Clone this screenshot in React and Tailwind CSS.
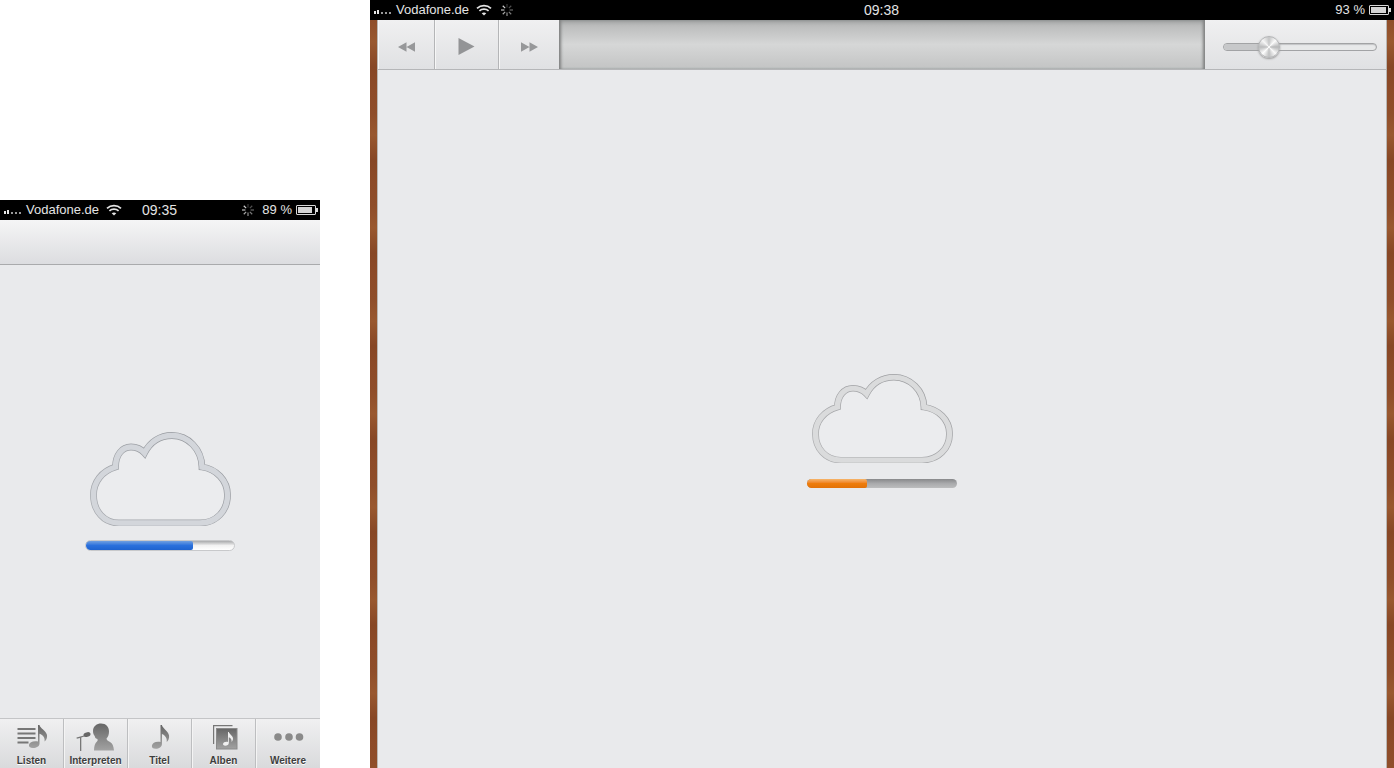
import React from 'react';

const CLOUD_PATH =
  'M29 91H110C126 91 137.500 79 137.500 63C137.500 48 126 37 112 35C111.500 17 98 3.500 82 3.500C70 3.500 60 10 54.500 21C51 17 46 15 41 15C32 15 25.500 23 25.500 35C12 39 3.500 50 3.500 63C3.500 79 14 91 29 91Z';

function Cloud({ id, height, band, edgeTop, edgeBottom }) {
  return (
    <svg width="141" height={height} viewBox="0 0 141 94" preserveAspectRatio="none" className="block" fill="none">
      <defs>
        <linearGradient id={id} x1="1" y1="0" x2="0" y2="1">
          <stop offset="0" stopColor={edgeTop} />
          <stop offset="1" stopColor={edgeBottom} />
        </linearGradient>
      </defs>
      <path d={CLOUD_PATH} fill="#ebecee" stroke={`url(#${id})`} strokeWidth="6.800" />
      <path d={CLOUD_PATH} stroke={band} strokeWidth="5.400" />
    </svg>
  );
}

function Signal() {
  return (
    <span className="flex items-end h-2 pl-px mr-[5px]">
      <span className="w-[2px] h-[3px] bg-[#e8e8e8]" />
      <span className="w-[2px] h-[4px] bg-[#e8e8e8] ml-px" />
      <span className="w-[2px] h-[2px] bg-[#9a9a9a] ml-[2px]" />
      <span className="w-[2px] h-[2px] bg-[#9a9a9a] ml-[2px]" />
      <span className="w-[2px] h-[2px] bg-[#9a9a9a] ml-[2px]" />
    </span>
  );
}

function Wifi({ className }) {
  return (
    <svg width="16" height="12" viewBox="0 0 16 12" className={className} fill="none" stroke="#e4e4e4" strokeWidth="1.800">
      <path d="M1 4.400C5 .8 11 .8 15 4.400" />
      <path d="M3.400 6.900C6 4.600 10 4.600 12.600 6.900" />
      <path d="M8 11.400 5.700 9.200C7 8.100 9 8.100 10.300 9.200Z" fill="#e4e4e4" stroke="none" />
    </svg>
  );
}

function Spinner({ className }) {
  const spokes = [0, 45, 90, 135, 180, 225, 270, 315];
  return (
    <svg width="14" height="14" viewBox="0 0 14 14" className={className}>
      {spokes.map((a, i) => (
        <line
          key={a}
          x1="7"
          y1="1"
          x2="7"
          y2="4.400"
          stroke="#e8e8e8"
          strokeWidth="1.200"
          strokeOpacity={0.25 + (i / 8) * 0.75}
          transform={`rotate(${a} 7 7)`}
        />
      ))}
    </svg>
  );
}

function Battery({ level }) {
  return (
    <span className="flex items-center">
      <span className="w-[20px] h-[10px] border border-[#d8d8d8] p-px flex rounded-[1px]">
        <span className="h-full bg-[#d4d4d4]" style={{ width: `${level}%` }} />
      </span>
      <span className="w-[2px] h-1 bg-[#d8d8d8]" />
    </span>
  );
}

function PhoneStatus() {
  return (
    <div className="h-5 bg-black flex items-center text-[13px] text-[#e4e4e4] pl-[3px] pr-[2px]">
      <Signal />
      <span>Vodafone.de</span>
      <Wifi className="ml-[7px]" />
      <span className="ml-[20px] text-[14px]">09:35</span>
      <Spinner className="ml-auto" />
      <span className="ml-[7px]">89 %</span>
      <span className="ml-[4px]">
        <Battery level={90} />
      </span>
    </div>
  );
}

// eighth note, stem top at the origin
const NOTE =
  'M0 0h1.500c.5 3.500 6.500 6 7.500 11 .5 3-1 6-2.500 7 .8-4-1.500-7-5-8.500V20c0 3-3 5-6.500 5-3 0-4.500-1.500-4-3.500.6-2.500 4-4.500 9-3.500Z';

function TabIcon({ children }) {
  return (
    <svg width="36" height="30" viewBox="0 0 36 30" className="block overflow-visible">
      <defs>
        <linearGradient id="tabGray" x1="0" y1="0" x2="0" y2="1">
          <stop offset="0" stopColor="#666" />
          <stop offset="1" stopColor="#a2a2a2" />
        </linearGradient>
      </defs>
      {children}
    </svg>
  );
}

const tabs = [
  {
    label: 'Listen',
    icon: (
      <>
        <path d="M3.500 6h18v2h-18zM3.500 10.500h18v2h-18zM3.500 15h18v2h-18zM3.500 19.500h11v2h-11z" fill="#777" />
        <path d={NOTE} transform="translate(24 3) scale(1 .92)" fill="url(#tabGray)" />
      </>
    ),
  },
  {
    label: 'Interpreten',
    icon: (
      <>
        <path d="M-1.500 15.500 6 13.400l.3 1.200-3 .9V29H2V15.900l-3.200.9Z" fill="#777" />
        <ellipse cx="9" cy="12.600" rx="3.600" ry="2.300" transform="rotate(-16 9 12.600)" fill="#666" />
        <path
          d="M15 9C15 4 19 1.500 23 1.500C28 1.500 31 5 31 9.500C31 13 30 15 28.500 16.500C28.500 18 30 19 32 20C34.500 21.300 35.500 24 36 28.500H16C16 24 17 21 19 19.500C20 18.500 19.800 17.500 19 16.800C17.500 16.500 16.800 15.500 16.800 14C15.800 13 15 11.500 15 9Z"
          fill="url(#tabGray)"
        />
      </>
    ),
  },
  {
    label: 'Titel',
    icon: <path d={NOTE} transform="translate(18.500 3) scale(.95)" fill="url(#tabGray)" />,
  },
  {
    label: 'Alben',
    icon: (
      <>
        <path d="M7 3h19.500v1.200H8.200V22H7Z" fill="#777" />
        <rect x="10.500" y="6.500" width="20.500" height="20.500" fill="url(#tabGray)" stroke="#8a8a8a" strokeWidth="1" />
        <path d={NOTE} transform="translate(22 10) scale(.55)" fill="#f0f0f0" />
      </>
    ),
  },
  {
    label: 'Weitere',
    icon: (
      <>
        <circle cx="8" cy="15" r="3.800" fill="#8a8a8a" />
        <circle cx="19" cy="15" r="3.800" fill="#8a8a8a" />
        <circle cx="29.500" cy="15" r="3.800" fill="#8a8a8a" />
      </>
    ),
  },
];

function TabBar() {
  return (
    <div className="h-[50px] shrink-0 flex border-t border-[#c4c5c7] bg-gradient-to-b from-[#f0f0f1] to-[#d9dadc]">
      {tabs.map((t, i) => (
        <div
          key={t.label}
          className={`w-[64px] flex flex-col items-center ${i < 4 ? 'border-r border-[#bdbec0] shadow-[1px_0_0_#f4f4f4]' : ''}`}
        >
          <div className="h-[37px] flex items-start pt-[3px]">
            <TabIcon>{t.icon}</TabIcon>
          </div>
          <span className="text-[10px] leading-none font-bold text-[#3d3d3d] whitespace-nowrap [text-shadow:0_1px_0_#fff]">
            {t.label}
          </span>
        </div>
      ))}
    </div>
  );
}

function Progress({ percent, height, fill, track }) {
  return (
    <div className={`w-[150px] rounded-full overflow-hidden flex ${track}`} style={{ height }}>
      <div className={`h-full rounded-r-[2px] ${fill}`} style={{ width: `${percent}%` }} />
    </div>
  );
}

function TransportButton({ width, children }) {
  return (
    <div
      className="h-full flex items-center justify-center pt-[4px] border-r border-[#b4b5b7] shadow-[inset_1px_0_0_#f6f6f6]"
      style={{ width }}
    >
      {children}
    </div>
  );
}

function TabletToolbar() {
  return (
    <div className="h-[50px] shrink-0 flex bg-gradient-to-b from-[#f0f0f1] to-[#e0e1e3] border-b border-[#b5b6b8]">
      <TransportButton width={57}>
        <svg width="17" height="10" viewBox="0 0 18 10">
          <path d="M9 0v10L0 5ZM18 0v10L9 5Z" fill="#97989a" />
        </svg>
      </TransportButton>
      <TransportButton width={64}>
        <svg width="17" height="17" viewBox="0 0 16 17">
          <path d="M0 0 16 8.500 0 17Z" fill="#939496" />
        </svg>
      </TransportButton>
      <div className="w-[60px] h-full flex items-center justify-center pt-[4px] shadow-[inset_1px_0_0_#f6f6f6]">
        <svg width="17" height="10" viewBox="0 0 18 10">
          <path d="M0 0v10l9-5ZM9 0v10l9-5Z" fill="#97989a" />
        </svg>
      </div>
      {/* recessed track area */}
      <div className="flex-1 h-full bg-gradient-to-b from-[#b4b5b5] via-[#d6d7d7] to-[#c3c4c4] shadow-[inset_3px_0_3px_-1px_#7f8080,inset_-3px_0_3px_-1px_#7f8080,inset_0_4px_4px_-2px_#999a9a]" />
      <div className="w-[181px] h-full flex items-center pl-[18px] pt-[4px]">
        <div className="relative w-[154px] h-[8px] rounded-full border border-[#a2a3a5] bg-[#e8e9ea] shadow-[inset_0_1px_1px_#c3c4c6]">
          <div className="h-full w-[44px] rounded-l-full bg-[#c7c8ca]" />
          <div className="absolute left-[34px] top-[-8px] w-[22px] h-[22px] rounded-full border border-[#b4b5b7] bg-[conic-gradient(#c4c5c6,#fbfbfb,#b6b7b8,#f8f8f8,#bfc0c1,#fdfdfd,#babbbc,#f6f6f6,#c4c5c6)] shadow-[0_1px_2px_#999]" />
        </div>
      </div>
    </div>
  );
}

function WoodEdge({ border }) {
  return (
    <div
      className={`w-2 shrink-0 ${border} border-[#b9b6b2] bg-[repeating-linear-gradient(180deg,#8f4e2a_0px,#99582f_22px,#874725_47px,#8d4b28_70px,#8f4e2a_93px)]`}
    />
  );
}

export default function App() {
  return (
    <div className="w-[1394px] h-[768px] bg-white flex overflow-hidden font-['Liberation_Sans',Arial,sans-serif]">
      {/* iPhone music app */}
      <div className="w-[320px] shrink-0 flex flex-col">
        <div className="h-[200px] shrink-0" />
        <PhoneStatus />
        <div className="h-[45px] shrink-0 bg-gradient-to-b from-[#f5f5f6] to-[#dcdde0] border-b border-[#a9aaac]" />
        <div className="flex-1 bg-[#e9eaec] flex flex-col items-center justify-center gap-[14px]">
          <Cloud id="cloudBlue" height={94} band="#d3d6db" edgeTop="#94979c" edgeBottom="#a9acb1" />
          <Progress
            percent={72}
            height={11}
            track="bg-gradient-to-b from-[#a9aaac] via-[#f2f2f2] to-white border border-[#c8c9cb]"
            fill="bg-gradient-to-b from-[#6f9fe0] via-[#2a70dc] to-[#1f63cf]"
          />
        </div>
        <TabBar />
      </div>

      {/* iPad music app */}
      <div className="ml-[50px] flex-1 flex flex-col min-w-0">
        <div className="h-5 bg-black shrink-0 flex items-center text-[#e4e4e4] text-[13px] pl-[3px] pr-[3px] relative">
          <Signal />
          <span>Vodafone.de</span>
          <Wifi className="ml-[7px]" />
          <Spinner className="ml-[8px]" />
          <span className="absolute left-[494px] text-[14px]">09:38</span>
          <span className="ml-auto mr-[4px]">93 %</span>
          <Battery level={92} />
        </div>
        <div className="flex-1 flex min-h-0">
          <WoodEdge border="border-r" />
          <div className="flex-1 flex flex-col bg-[#e9eaec] min-w-0">
            <TabletToolbar />
            <div className="flex-1 flex flex-col items-center pt-[304px] gap-[16px]">
              <Cloud id="cloudOrange" height={89} band="#dadbdc" edgeTop="#9b9c9f" edgeBottom="#adaeb0" />
              <Progress
                percent={40}
                height={9}
                track="bg-gradient-to-b from-[#88898b] via-[#a9aaac] to-[#bcbdbe]"
                fill="bg-gradient-to-b from-[#f6b56a] via-[#ee7d0c] to-[#e37208]"
              />
            </div>
          </div>
          <WoodEdge border="border-l" />
        </div>
      </div>
    </div>
  );
}
